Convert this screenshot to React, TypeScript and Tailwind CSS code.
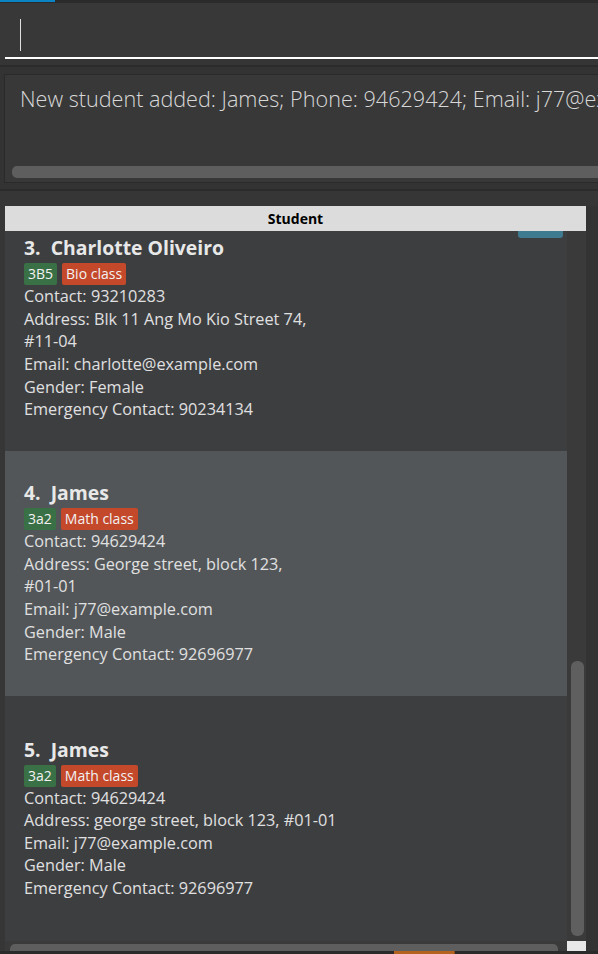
import React from "react";

type Student = {
  idx: number;
  name: string;
  tags: { label: string; kind: "group" | "class" }[];
  contact: string;
  address: string[];
  email: string;
  gender: string;
  emergency: string;
  selected?: boolean;
};

const students: Student[] = [
  {
    idx: 3,
    name: "Charlotte Oliveiro",
    tags: [
      { label: "3B5", kind: "group" },
      { label: "Bio class", kind: "class" },
    ],
    contact: "93210283",
    address: ["Blk 11 Ang Mo Kio Street 74,", "#11-04"],
    email: "charlotte@example.com",
    gender: "Female",
    emergency: "90234134",
  },
  {
    idx: 4,
    name: "James",
    tags: [
      { label: "3a2", kind: "group" },
      { label: "Math class", kind: "class" },
    ],
    contact: "94629424",
    address: ["George street, block 123,", "#01-01"],
    email: "j77@example.com",
    gender: "Male",
    emergency: "92696977",
    selected: true,
  },
  {
    idx: 5,
    name: "James",
    tags: [
      { label: "3a2", kind: "group" },
      { label: "Math class", kind: "class" },
    ],
    contact: "94629424",
    address: ["george street, block 123, #01-01"],
    email: "j77@example.com",
    gender: "Male",
    emergency: "92696977",
  },
];

const StudentCard = ({ s }: { s: Student }) => (
  <div
    className={`h-[245px] shrink-0 flex flex-col justify-center pl-[19px] text-[#e0e0e0] ${
      s.selected ? "bg-[#525659]" : "bg-[#3d3e40]"
    }`}
  >
    <div className="text-[19.4px] font-bold leading-[24px] text-[#e8e8e8] whitespace-pre">
      {`${s.idx}.  ${s.name}`}
    </div>
    <div className="flex gap-[5px] mt-[3px]">
      {s.tags.map((t) => (
        <span
          key={t.label}
          className={`h-[22px] px-[4px] text-[14px] leading-[22px] rounded-[2px] text-[#f2f2f2] ${
            t.kind === "group" ? "bg-[#3a7045]" : "bg-[#c4482a]"
          }`}
        >
          {t.label}
        </span>
      ))}
    </div>
    <div className="text-[16.25px] leading-[22.6px]">
      <div>Contact: {s.contact}</div>
      <div>
        Address: {s.address[0]}
        {s.address[1] && <br />}
        {s.address[1]}
      </div>
      <div>Email: {s.email}</div>
      <div>Gender: {s.gender}</div>
      <div>Emergency Contact: {s.emergency}</div>
    </div>
  </div>
);

export default function App() {
  return (
    <div className="w-[598px] h-[954px] overflow-hidden bg-[#333333] flex flex-col font-['Open_Sans',sans-serif]">
      {/* tab strip */}
      <div className="h-[3px] bg-[#2b2b2b] shrink-0">
        <div className="w-[55px] h-[2px] bg-[#0b84c6]" />
      </div>

      {/* command box */}
      <div className="h-[54px] shrink-0 bg-[#383838] pl-[20px] pt-[16px]">
        <div className="w-[1px] h-[32px] bg-[#e0e0e0]" />
      </div>
      <div className="h-[2px] shrink-0 bg-[#383838] pl-[5px]">
        <div className="h-[2px] bg-white" />
      </div>
      <div className="h-[6px] shrink-0 bg-[#353535]" />
      <div className="h-[2px] shrink-0 bg-[#2b2b2b]" />
      <div className="h-[7px] shrink-0" />

      {/* result display */}
      <div className="h-[109px] shrink-0 ml-[4px] border border-r-0 border-[#2a2a2a] bg-[#383838] flex flex-col overflow-hidden">
        <div className="pl-[15px] pt-[9px] text-[21.6px] font-light leading-[29px] text-[#d8d8d8] whitespace-nowrap">
          New student added: James; Phone: 94629424; Email: j77@example.com; Address: George street, block 123, #01-01
        </div>
        <div className="mt-auto mb-[4px] ml-[7px] h-[12px] rounded-l-[5px] bg-[#5e5e5e]" />
      </div>

      <div className="h-[6px] shrink-0" />
      <div className="h-[2px] shrink-0 bg-[#2b2b2b]" />
      <div className="h-[15px] shrink-0 bg-[#363636]" />

      {/* student list */}
      <div className="relative h-[735px] shrink-0 flex">
        <div className="w-[5px] bg-[#363636]" />
        <div className="w-[562px] overflow-hidden flex flex-col">
          {students.map((s) => (
            <StudentCard key={s.idx} s={s} />
          ))}
        </div>
        <div className="w-[19px] bg-[#3a3a3a] flex flex-col pt-[455px] pb-[5px] pl-[4px] pr-[2px]">
          <div className="flex-1 rounded-[6px] bg-[#5f5f5f]" />
        </div>
        <div className="flex-1 bg-[#333333]" />
        <div className="absolute top-0 left-[5px] w-[581px] h-[25px] bg-[#dcdcdc] text-black text-[14px] font-bold flex items-center justify-center">
          Student
        </div>
        <div className="absolute top-[25px] left-[518px] w-[45px] h-[7px] rounded-b-[3px] bg-[#3e7a90]" />
      </div>

      {/* horizontal scrollbar */}
      <div className="h-[10px] shrink-0 flex">
        <div className="w-[5px] bg-[#363636]" />
        <div className="w-[562px] bg-[#3a3a3a] pt-[3px] pl-[5px] pr-[9px]">
          <div className="h-[8px] rounded-t-[5px] bg-[#5e5e5e]" />
        </div>
        <div className="w-[19px] bg-[#e8e8e8]" />
        <div className="flex-1 bg-[#333333]" />
      </div>

      {/* status strip */}
      <div className="flex-1 bg-[#2a2a2a] pl-[394px]">
        <div className="w-[61px] h-full bg-[#b4621f] border-r border-[#8f4a14]" />
      </div>
    </div>
  );
}
